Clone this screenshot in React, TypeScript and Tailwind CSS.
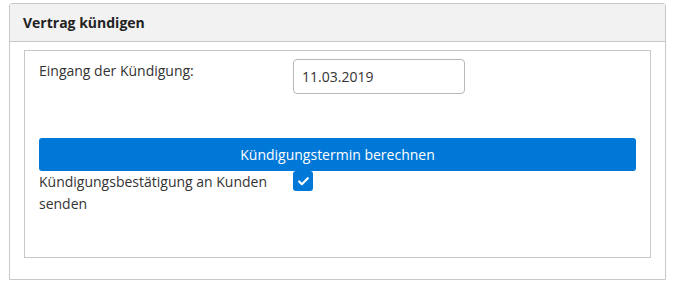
import { Check } from 'lucide-react';

export default function App() {
  return (
    <div className="min-h-screen bg-white pt-[3px] pl-[9px] text-[14px] text-[#333] font-['Open_Sans',sans-serif]">
      <div className="w-[657px] border border-[#c8c8c8] rounded-t-[3px]">
        {/* Panel header */}
        <div className="h-[38px] bg-[#f2f2f2] border-b border-[#c8c8c8] px-[13px] flex items-center font-bold text-[#222]">
          Vertrag kündigen
        </div>

        {/* Panel body */}
        <div className="pt-[8px] pb-[21px] px-[14px]">
          <div className="border border-[#c8c8c8] px-[14px] pt-[8px] pb-[42px]">
            <div className="flex h-[79px]">
              <label className="w-[254px] pt-[1px] leading-[22px]">Eingang der Kündigung:</label>
              <input
                type="text"
                defaultValue="11.03.2019"
                className="w-[172px] h-[35px] border border-[#b8b8b8] rounded-[4px] px-[8px] text-[14px] text-[#333] outline-none"
              />
            </div>

            <button className="w-full h-[33px] bg-[#0078d7] text-white rounded-[3px] text-[14px]">
              Kündigungstermin berechnen
            </button>

            <div className="flex">
              <span className="w-[254px] leading-[22px]">Kündigungsbestätigung an Kunden senden</span>
              <span className="w-[20px] h-[20px] bg-[#0078d7] rounded-[3px] flex items-center justify-center">
                <Check className="w-[13px] h-[13px] text-white" strokeWidth={4} />
              </span>
            </div>
          </div>
        </div>
      </div>
    </div>
  );
}
